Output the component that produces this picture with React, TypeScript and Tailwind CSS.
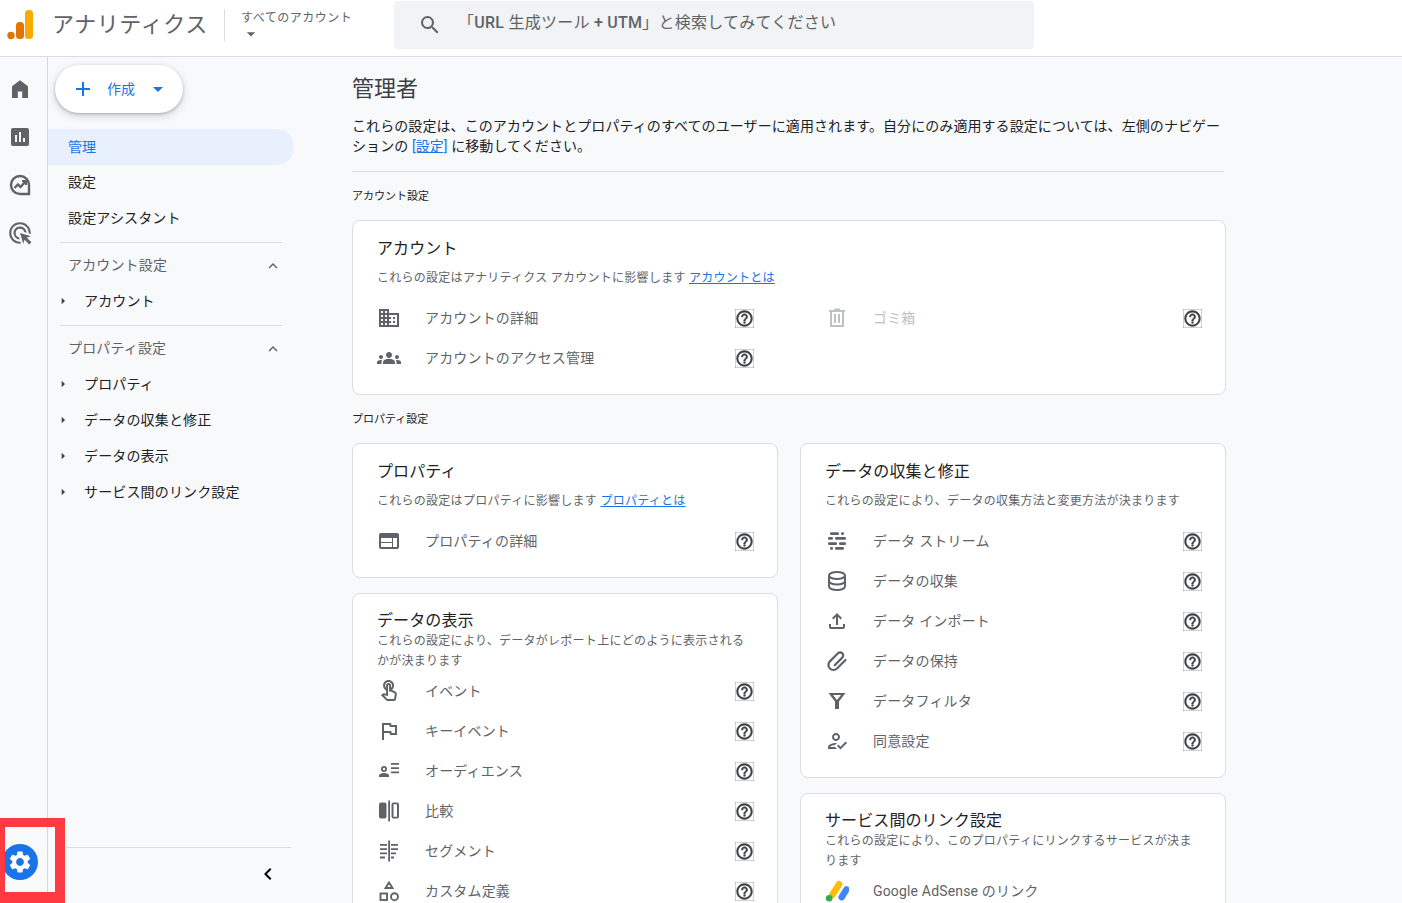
import React from "react";
import {
  MdHelpOutline, MdOutlineDomain, MdGroups, MdWeb, MdOutlineTouchApp, MdOutlineAssistantPhoto,
  MdOutlineFileUpload, MdOutlineHowToReg, MdOutlineAdsClick, MdAssessment,
  MdSearch, MdAdd, MdArrowDropDown, MdArrowRight, MdKeyboardArrowUp, MdChevronLeft, MdSettings,
} from "react-icons/md";

const G = "#5f6368";

const Svg = ({ children, size = 24 }: { children: React.ReactNode; size?: number }) => (
  <svg width={size} height={size} viewBox="0 0 24 24" fill={G}>{children}</svg>
);

const Home = () => (
  <Svg>
    <path d="M12 3.200 4 9.200V21h5.800v-6.500h4.400V21H20V9.200z" />
  </Svg>
);
const Trash = () => (
  <svg width={24} height={24} viewBox="0 0 24 24" fill="#bdc1c6">
    <path d="M4 4h16v2h-1v15H5V6H4V4zm3 2v13h10V6H7zm2 2h2v9H9V8zm4 0h2v9h-2V8zM9 2.500h6V4H9z" />
  </svg>
);
const Stream = () => (
  <Svg>
    <rect x="5" y="3.200" width="9" height="2.800" rx="1.200" /><rect x="16" y="3.200" width="3" height="2.800" rx="1.200" />
    <rect x="3" y="8" width="5" height="2.800" rx="1.200" /><rect x="10" y="8" width="11" height="2.800" rx="1.200" />
    <rect x="3" y="13.200" width="9" height="2.800" rx="1.200" /><rect x="14" y="13.200" width="7" height="2.800" rx="1.200" />
    <rect x="5" y="18" width="3" height="2.800" rx="1.200" /><rect x="10" y="18" width="9" height="2.800" rx="1.200" />
  </Svg>
);
const Database = () => (
  <svg width={24} height={24} viewBox="0 0 24 24" fill="none" stroke={G} strokeWidth="2">
    <ellipse cx="12" cy="6.500" rx="8" ry="3.500" />
    <path d="M4 6.500v11c0 1.900 3.600 3.500 8 3.500s8-1.600 8-3.500v-11M4 12c0 1.900 3.600 3.500 8 3.500s8-1.600 8-3.500" />
  </svg>
);
const Clip = () => (
  <svg width={24} height={24} viewBox="0 0 24 24" fill="none" stroke={G} strokeWidth="2.200" strokeLinecap="round">
    <path d="M20.500 11 12 19.500a5 5 0 0 1-7.100-7.100L13 4.300a3 3 0 0 1 4.300 4.300L9.700 16.200" />
  </svg>
);
const Filter = () => (
  <Svg>
    <path fillRule="evenodd" d="M3.500 4h17L14 12.500V20h-4v-7.500zM8 6l4 5 4-5z" />
  </Svg>
);
const Audience = () => (
  <Svg>
    <path d="M7 7a3 3 0 1 0 0 6 3 3 0 0 0 0-6zm0 1.800a1.200 1.200 0 1 1 0 2.400 1.200 1.200 0 0 1 0-2.400zM7 14c-2.700 0-5 1-5 2.500V18h10v-1.500C12 15 9.700 14 7 14z" />
    <path d="M14 4h8v1.800h-8zM14 8.200h8V10h-8zM14 12.400h8v1.800h-8z" />
  </Svg>
);
const Compare = () => (
  <Svg>
    <rect x="2" y="3.500" width="7.500" height="16" rx="2" />
    <rect x="11.200" y="1.500" width="1.800" height="21" />
    <path d="M16.500 3.500H20a2 2 0 0 1 2 2v12a2 2 0 0 1-2 2h-3.500a2 2 0 0 1-2-2v-12a2 2 0 0 1 2-2zm0 1.800v12.400H20V5.300z" />
  </Svg>
);
const Segment = () => (
  <Svg>
    <rect x="11.200" y="1.500" width="1.800" height="21" />
    <path d="M3 5h7v1.800H3zM3 9.200h7V11H3zM3 13.400h7v1.800H3zM3 17.600h5v1.800H3zM14 5h7v1.800h-7zM14 9.200h7V11h-7zM14 13.400h5v1.800h-5zM14 17.600h3v1.800h-3z" />
  </Svg>
);
const Custom = () => (
  <svg width={24} height={24} viewBox="0 0 24 24" fill="none" stroke={G} strokeWidth="1.900">
    <path d="M12 3.500 15.500 9h-7z" />
    <rect x="3.500" y="14.500" width="6.500" height="6.500" />
    <circle cx="17.500" cy="17.700" r="3.500" />
  </svg>
);
const Adsense = () => (
  <svg width={24} height={24} viewBox="0 0 24 24">
    <rect x="7.500" y="1" width="6.500" height="19" rx="3.250" fill="#fbbc04" transform="rotate(32 10.700 10.500)" />
    <rect x="16" y="6.500" width="6.500" height="15.500" rx="3.250" fill="#4285f4" transform="rotate(32 19 14)" />
    <circle cx="4.200" cy="19.200" r="3.300" fill="#34a853" />
  </svg>
);
const Explore = () => (
  <svg width={24} height={24} viewBox="0 0 24 24" fill="none" stroke={G} strokeWidth="2.400">
    <path d="M21 21H12a9 9 0 1 1 9-9z" />
    <path d="M6.500 15l3.500-3.500 2.500 2.500 4.500-5" />
    <path d="M14 8h4v4" strokeWidth="2" />
  </svg>
);

type Row = { icon: React.ReactNode; label: string; disabled?: boolean; noHelp?: boolean };

const Help = () => (
  <span className="-mr-px flex w-5 shrink-0 items-center justify-center text-[#3c4043]">
    <MdHelpOutline size={19} className="stroke-[0.6]" />
  </span>
);

const ItemRow = ({ icon, label, disabled, noHelp }: Row) => (
  <div className="flex h-10 items-center">
    <span className="flex w-6 shrink-0 items-center justify-center">{icon}</span>
    <span className={`ml-6 flex-1 text-sm tracking-[0.17px] ${disabled ? "text-[#bdc1c6]" : "text-[#5f6368]"}`}>{label}</span>
    {!noHelp && <Help />}
  </div>
);

const Link = ({ children }: { children: React.ReactNode }) => (
  <span className="text-[#1a73e8] underline">{children}</span>
);

const Card = ({ title, sub, rows, tight }: { title: string; sub: React.ReactNode; rows: Row[]; tight?: boolean }) => (
  <div className={`rounded-lg border border-[#dadce0] bg-white px-6 ${tight ? "pt-[17px]" : "pt-4"} pb-4`}>
    <div className={`text-base tracking-[0.1px] text-[#202124] ${tight ? "leading-5" : "leading-6"}`}>{title}</div>
    <div className={`text-xs tracking-[0.27px] text-[#5f6368] ${tight ? "leading-5" : "mt-[9px] leading-4"}`}>{sub}</div>
    <div className={tight ? "" : "mt-3"}>
      {rows.map((r) => <ItemRow key={r.label} {...r} />)}
    </div>
  </div>
);

const SectionLabel = ({ children }: { children: React.ReactNode }) => (
  <div className="mt-[17px] mb-[15px] text-[11px] leading-4 text-[#202124]">{children}</div>
);

const NavGroup = ({ title, items }: { title: string; items: string[] }) => (
  <div>
    <div className="flex h-9 items-center justify-between pl-5 pr-3 text-sm tracking-[0.15px] text-[#5f6368]">
      <span>{title}</span>
      <MdKeyboardArrowUp size={18} color="#5f6368" className="mt-0.5" />
    </div>
    {items.map((t) => (
      <div key={t} className="flex h-9 items-center pl-[7px] text-sm tracking-[0.15px] text-[#202124]">
        <MdArrowRight size={16} color="#3c4043" />
        <span className="ml-[13px]">{t}</span>
      </div>
    ))}
  </div>
);

export default function App() {
  return (
    <div className="relative flex h-[903px] w-[1402px] flex-col overflow-hidden bg-[#f8f9fb] font-['Roboto','Noto_Sans_CJK_JP',sans-serif]">
      <header className="flex h-[57px] shrink-0 items-center border-b border-[#dadce0] bg-white">
        <svg width={26} height={32} viewBox="0 0 26 32" className="ml-[7px] -mt-[9px] shrink-0">
          <rect x="18" y="2" width="8" height="29" rx="3.500" fill="#f9ab00" />
          <rect x="9" y="14" width="8" height="17" rx="3.500" fill="#e37400" />
          <circle cx="4" cy="27.500" r="3.700" fill="#e37400" />
        </svg>
        <div className="ml-[19px] -mt-[6px] w-[172px] text-[22px] leading-7 tracking-[0.6px] text-[#5f6368]">アナリティクス</div>
        <div className="-mt-[7px] h-8 w-px bg-[#dadce0]" />
        <div className="-mt-[6px] ml-4 w-[153px]">
          <div className="text-xs leading-4 tracking-[0.5px] text-[#5f6368]">すべてのアカウント</div>
          <div className="-mt-[2px] h-4"><MdArrowDropDown size={20} color="#5f6368" /></div>
        </div>
        <div className="-mt-[7px] flex h-[48px] w-[640px] items-center rounded bg-[#f1f3f4] pl-[24px] text-[#5f6368]">
          <MdSearch size={24} />
          <span className="ml-4 -mt-[3px] text-base tracking-[0.25px]">「<span className="font-medium">URL</span> 生成ツール <span className="font-medium">+ UTM</span>」と検索してみてください</span>
        </div>
      </header>

      <div className="flex min-h-0 flex-1">
        <aside className="flex w-12 shrink-0 flex-col items-center justify-between border-r border-[#d5d7db] pr-[7px]">
          <div className="flex flex-col items-center gap-6 pt-5">
            <Home />
            <MdAssessment size={24} color={G} />
            <Explore />
            <MdOutlineAdsClick size={26} color={G} className="-my-px" />
          </div>
          <div className="mb-[23px] flex h-9 w-9 shrink-0 items-center justify-center rounded-full bg-[#1a73e8]">
            <MdSettings size={26} color="#fff" />
          </div>
        </aside>

        <nav className="flex w-[246px] shrink-0 flex-col">
          <div className="pt-2 pl-[7px]">
            <div className="flex h-12 w-32 items-center rounded-full bg-white pl-4 text-sm text-[#1a73e8] shadow-[0_1px_3px_rgba(60,64,67,0.3),0_3px_8px_rgba(60,64,67,0.2)]">
              <MdAdd size={24} />
              <span className="ml-3">作成</span>
              <MdArrowDropDown size={24} className="ml-[11px]" />
            </div>
          </div>
          <div className="mt-4 flex h-9 items-center rounded-r-[18px] bg-[#e8f0fe] pl-5 text-sm text-[#1a73e8]">管理</div>
          <div className="flex h-9 items-center pb-0.5 pl-5 text-sm text-[#202124]">設定</div>
          <div className="flex h-9 items-center pb-0.5 pl-5 text-sm tracking-[0.15px] text-[#202124]">設定アシスタント</div>
          <div className="mt-[5px] mb-1 ml-3 mr-3 h-px bg-[#dadce0]" />
          <NavGroup title="アカウント設定" items={["アカウント"]} />
          <div className="mt-[6px] mb-1 ml-3 mr-3 h-px bg-[#dadce0]" />
          <NavGroup title="プロパティ設定" items={["プロパティ", "データの収集と修正", "データの表示", "サービス間のリンク設定"]} />
          <div className="mt-auto ml-[18px] -mr-[-3px] border-t border-[#dadce0] h-[56px] flex items-center justify-end pr-[11px]">
            <MdChevronLeft size={24} color="#000" className="-mt-[3px]" />
          </div>
        </nav>

        <main className="ml-[58px] w-[874px] shrink-0">
          <h1 className="mt-4 text-[22px] leading-8 font-normal text-[#3c4043]">管理者</h1>
          <p className="mt-[11px] w-[872px] border-b border-[#dadce0] pb-[15px] text-sm leading-5 tracking-[0.08px] text-[#202124]">
            これらの設定は、このアカウントとプロパティのすべてのユーザーに適用されます。自分にのみ適用する設定については、左側のナビゲーションの <Link>[設定]</Link> に移動してください。
          </p>
          <SectionLabel>アカウント設定</SectionLabel>
          <div className="rounded-lg border border-[#dadce0] bg-white px-6 pt-4 pb-4">
            <div className="text-base leading-6 tracking-[0.1px] text-[#202124]">アカウント</div>
            <div className="mt-[9px] text-xs leading-4 tracking-[0.27px] text-[#5f6368]">これらの設定はアナリティクス アカウントに影響します <Link>アカウントとは</Link></div>
            <div className="mt-3 grid grid-cols-2 gap-x-[72px]">
              <ItemRow icon={<MdOutlineDomain size={24} color={G} />} label="アカウントの詳細" />
              <ItemRow icon={<Trash />} label="ゴミ箱" disabled />
              <ItemRow icon={<MdGroups size={26} color={G} />} label="アカウントのアクセス管理" />
            </div>
          </div>
          <SectionLabel>プロパティ設定</SectionLabel>
          <div className="grid grid-cols-2 gap-x-[22px]">
            <div className="flex flex-col gap-[15px]">
              <Card
                title="プロパティ"
                sub={<>これらの設定はプロパティに影響します <Link>プロパティとは</Link></>}
                rows={[{ icon: <MdWeb size={24} color={G} />, label: "プロパティの詳細" }]}
              />
              <Card
                tight
                title="データの表示"
                sub="これらの設定により、データがレポート上にどのように表示されるかが決まります"
                rows={[
                  { icon: <MdOutlineTouchApp size={24} color={G} />, label: "イベント" },
                  { icon: <MdOutlineAssistantPhoto size={24} color={G} />, label: "キーイベント" },
                  { icon: <Audience />, label: "オーディエンス" },
                  { icon: <Compare />, label: "比較" },
                  { icon: <Segment />, label: "セグメント" },
                  { icon: <Custom />, label: "カスタム定義" },
                ]}
              />
            </div>
            <div className="flex flex-col gap-[15px]">
              <Card
                title="データの収集と修正"
                sub="これらの設定により、データの収集方法と変更方法が決まります"
                rows={[
                  { icon: <Stream />, label: "データ ストリーム" },
                  { icon: <Database />, label: "データの収集" },
                  { icon: <MdOutlineFileUpload size={24} color={G} />, label: "データ インポート" },
                  { icon: <Clip />, label: "データの保持" },
                  { icon: <Filter />, label: "データフィルタ" },
                  { icon: <MdOutlineHowToReg size={24} color={G} />, label: "同意設定" },
                ]}
              />
              <Card
                tight
                title="サービス間のリンク設定"
                sub="これらの設定により、このプロパティにリンクするサービスが決まります"
                rows={[{ icon: <Adsense />, label: "Google AdSense のリンク", noHelp: true }]}
              />
            </div>
          </div>
        </main>
      </div>

      <div className="pointer-events-none absolute bottom-0 left-0 h-[85px] w-[65px] border-t-[9px] border-r-[10px] border-b-[11px] border-l-[5px] border-[#ff3b41]" />
    </div>
  );
}
